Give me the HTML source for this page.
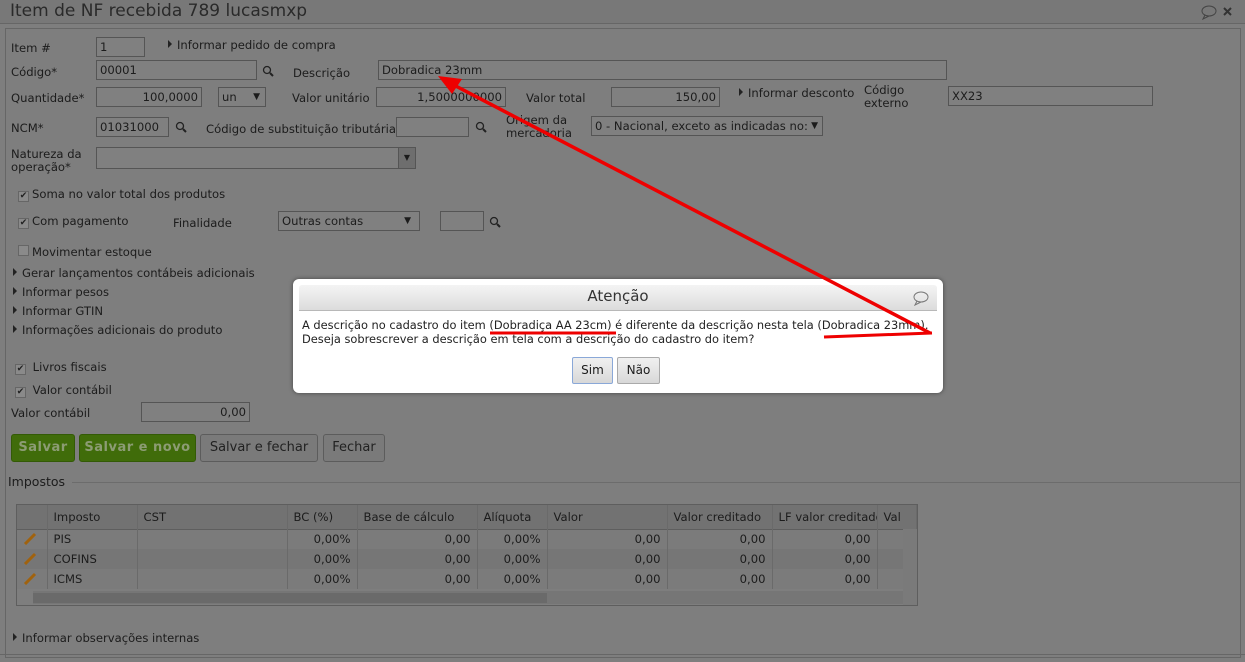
<!DOCTYPE html>
<html><head><meta charset="utf-8"><style>
*{box-sizing:border-box;margin:0;padding:0}
body{width:1245px;height:662px;overflow:hidden;background:#7e7e7e;font-family:"DejaVu Sans","Liberation Sans",sans-serif;font-size:11.6px;color:#1c1c1c;position:relative}
.a{position:absolute;white-space:nowrap}
.in{position:absolute;height:20px;border:1px solid #555;background:#808080;padding:2px 3px;font-size:11.6px;line-height:14px;white-space:nowrap;overflow:hidden}
.r{text-align:right}
.tri{display:inline-block;width:0;height:0;border-top:4px solid transparent;border-bottom:4px solid transparent;border-left:4px solid #222;margin-right:5px;vertical-align:1px}
.cb{display:inline-block;width:11px;height:11px;border:1px solid #666;background:#8a8a8a;vertical-align:-1px;margin-right:3px;font-size:9px;line-height:9px;text-align:center;color:#222;position:relative;top:-1px}
.mag{position:absolute;width:12px;height:12px}
.btn{position:absolute;height:28px;border-radius:3px;font-size:13px;line-height:26px;text-align:center}
.g{background:#406c0a;border:1px solid #335a06;color:#8c9c74;font-weight:bold;letter-spacing:.5px}
.gr{background:#7a7a7a;border:1px solid #5c5c5c;color:#222}
table{border-collapse:collapse;font-size:11.6px;table-layout:fixed}
td{height:20px;border-right:1px solid #6a6a6a;padding:0 6px;white-space:nowrap;overflow:hidden}
</style></head><body>
<div class="a" style="left:0;top:0;width:1245px;height:24px;background:#787878;border-bottom:1px solid #666"></div>
<div class="a" style="left:10px;top:1px;font-size:17px;color:#2a2a2a">Item de NF recebida 789 lucasmxp</div>
<svg class="a" style="left:1200px;top:4px" width="42" height="16"><ellipse cx="9" cy="7" rx="7" ry="5" fill="none" stroke="#444"/><path d="M5 11 L3 15 L9 12" fill="none" stroke="#444"/><path d="M24 4 L31 11 M31 4 L24 11" stroke="#333" stroke-width="2"/></svg>
<div class="a" style="left:5px;top:28px;width:1236px;height:630px;border:1px solid #666"></div>

<div class="a" style="left:11px;top:41px">Item #</div>
<div class="in" style="left:96px;top:37px;width:49px">1</div>
<div class="a" style="left:168px;top:38px"><span class="tri"></span>Informar pedido de compra</div>

<div class="a" style="left:11px;top:65px">Código*</div>
<div class="in" style="left:96px;top:60px;width:161px">00001</div>
<svg class="mag" style="left:262px;top:65px"><circle cx="5" cy="5" r="3.5" fill="none" stroke="#222" stroke-width="1.3"/><path d="M8 8 L11 11" stroke="#222" stroke-width="2"/></svg>
<div class="a" style="left:293px;top:66px">Descrição</div>
<div class="in" style="left:378px;top:60px;width:569px">Dobradica 23mm</div>

<div class="a" style="left:11px;top:91px">Quantidade*</div>
<div class="in r" style="left:96px;top:87px;width:106px">100,0000</div>
<div class="in" style="left:218px;top:87px;width:48px">un<span style="position:absolute;right:5px;font-size:9px">▼</span></div>
<div class="a" style="left:292px;top:91px">Valor unitário</div>
<div class="in r" style="left:376px;top:87px;width:130px">1,5000000000</div>
<div class="a" style="left:526px;top:91px">Valor total</div>
<div class="in r" style="left:611px;top:87px;width:109px">150,00</div>
<div class="a" style="left:739px;top:86px"><span class="tri"></span>Informar desconto</div>
<div class="a" style="left:864px;top:84px;line-height:13px">Código<br>externo</div>
<div class="in" style="left:948px;top:86px;width:205px">XX23</div>

<div class="a" style="left:11px;top:121px">NCM*</div>
<div class="in" style="left:96px;top:117px;width:73px">01031000</div>
<svg class="mag" style="left:175px;top:121px"><circle cx="5" cy="5" r="3.5" fill="none" stroke="#222" stroke-width="1.3"/><path d="M8 8 L11 11" stroke="#222" stroke-width="2"/></svg>
<div class="a" style="left:206px;top:122px">Código de substituição tributária</div>
<div class="in" style="left:396px;top:117px;width:73px"></div>
<svg class="mag" style="left:475px;top:121px"><circle cx="5" cy="5" r="3.5" fill="none" stroke="#222" stroke-width="1.3"/><path d="M8 8 L11 11" stroke="#222" stroke-width="2"/></svg>
<div class="a" style="left:506px;top:114px;line-height:13px">Origem da<br>mercadoria</div>
<div class="in" style="left:591px;top:116px;width:232px">0 - Nacional, exceto as indicadas no:<span style="position:absolute;right:4px;font-size:9px">▼</span></div>

<div class="a" style="left:11px;top:148px;line-height:13px">Natureza da<br>operação*</div>
<div class="in" style="left:96px;top:147px;width:320px;height:22px"></div>
<div class="a" style="left:398px;top:148px;width:17px;height:20px;border-left:1px solid #555;background:#6e6e6e;font-size:8px;text-align:center;line-height:20px">▼</div>

<div class="a" style="left:18px;top:187px"><span class="cb">✔</span>Soma no valor total dos produtos</div>
<div class="a" style="left:18px;top:214px"><span class="cb">✔</span>Com pagamento</div>
<div class="a" style="left:173px;top:216px">Finalidade</div>
<div class="in" style="left:278px;top:211px;width:142px">Outras contas<span style="position:absolute;right:8px;font-size:9px">▼</span></div>
<div class="in" style="left:440px;top:211px;width:44px"></div>
<svg class="mag" style="left:489px;top:216px"><circle cx="5" cy="5" r="3.5" fill="none" stroke="#222" stroke-width="1.3"/><path d="M8 8 L11 11" stroke="#222" stroke-width="2"/></svg>
<div class="a" style="left:18px;top:245px"><span class="cb"></span>Movimentar estoque</div>
<div class="a" style="left:13px;top:266px"><span class="tri"></span>Gerar lançamentos contábeis adicionais</div>
<div class="a" style="left:13px;top:285px"><span class="tri"></span>Informar pesos</div>
<div class="a" style="left:13px;top:304px"><span class="tri"></span>Informar GTIN</div>
<div class="a" style="left:13px;top:323px"><span class="tri"></span>Informações adicionais do produto</div>
<div class="a" style="left:15px;top:360px"><span class="cb">✔</span> Livros fiscais</div>
<div class="a" style="left:15px;top:383px"><span class="cb">✔</span> Valor contábil</div>
<div class="a" style="left:11px;top:406px">Valor contábil</div>
<div class="in r" style="left:141px;top:402px;width:109px">0,00</div>

<div class="btn g" style="left:11px;top:434px;width:64px">Salvar</div>
<div class="btn g" style="left:79px;top:434px;width:117px">Salvar e novo</div>
<div class="btn gr" style="left:200px;top:434px;width:118px">Salvar e fechar</div>
<div class="btn gr" style="left:323px;top:434px;width:62px">Fechar</div>

<div class="a" style="left:8px;top:474px;font-size:12.5px">Impostos</div>
<div class="a" style="left:72px;top:482px;width:1168px;border-top:1px solid #6c6c6c"></div>

<div class="a" style="left:16px;top:504px;width:902px;height:102px;border:1px solid #5e5e5e;overflow:hidden">
<table style="width:900px">
<colgroup><col style="width:30px"><col style="width:90px"><col style="width:150px"><col style="width:70px"><col style="width:120px"><col style="width:70px"><col style="width:120px"><col style="width:105px"><col style="width:105px"><col></colgroup>
<tr style="background:#727272;border-bottom:1px solid #5e5e5e"><td style="height:24px"></td><td>Imposto</td><td>CST</td><td>BC (%)</td><td>Base de cálculo</td><td>Alíquota</td><td>Valor</td><td>Valor creditado</td><td>LF valor creditado</td><td>Val</td></tr>
<tr style="background:#7b7b7b"><td><svg width="14" height="14"><path d="M2 13 L12 3" stroke="#a0620e" stroke-width="3"/></svg></td><td>PIS</td><td></td><td class="r">0,00%</td><td class="r">0,00</td><td class="r">0,00%</td><td class="r">0,00</td><td class="r">0,00</td><td class="r">0,00</td><td></td></tr>
<tr style="background:#767676"><td><svg width="14" height="14"><path d="M2 13 L12 3" stroke="#a0620e" stroke-width="3"/></svg></td><td>COFINS</td><td></td><td class="r">0,00%</td><td class="r">0,00</td><td class="r">0,00%</td><td class="r">0,00</td><td class="r">0,00</td><td class="r">0,00</td><td></td></tr>
<tr style="background:#7b7b7b"><td><svg width="14" height="14"><path d="M2 13 L12 3" stroke="#a0620e" stroke-width="3"/></svg></td><td>ICMS</td><td></td><td class="r">0,00%</td><td class="r">0,00</td><td class="r">0,00%</td><td class="r">0,00</td><td class="r">0,00</td><td class="r">0,00</td><td></td></tr>
</table>
<div class="a" style="left:16px;top:86px;width:870px;height:13px;background:#767676"></div>
<div class="a" style="left:16px;top:88px;width:514px;height:10px;background:#6a6a6a"></div>
<div class="a" style="left:886px;top:24px;width:15px;height:76px;background:#7a7a7a"></div>
</div>

<div class="a" style="left:13px;top:631px"><span class="tri"></span>Informar observações internas</div>
<div class="a" style="left:0;top:654px;width:1245px;border-top:1px solid #666"></div>

<div class="a" style="left:293px;top:279px;width:650px;height:114px;background:#fff;border-radius:6px;box-shadow:0 0 4px #444"></div>
<div class="a" style="left:299px;top:285px;width:638px;height:26px;background:linear-gradient(#f4f4f4,#dcdcdc);border-bottom:1px solid #b8b8b8;border-radius:3px 3px 0 0"></div>
<div class="a" style="left:299px;top:287px;width:638px;text-align:center;font-size:15px;color:#333">Atenção</div>
<svg class="a" style="left:912px;top:290px" width="18" height="16"><ellipse cx="9" cy="7" rx="7" ry="5" fill="none" stroke="#777"/><path d="M5 11 L3 15 L9 12" fill="none" stroke="#777"/></svg>
<div class="a" style="left:302px;top:318px;line-height:14px;color:#222;font-size:11.4px">A descrição no cadastro do item (Dobradiça AA 23cm) é diferente da descrição nesta tela (Dobradica 23mm).<br>Deseja sobrescrever a descrição em tela com a descrição do cadastro do item?</div>
<div class="a" style="left:572px;top:357px;width:41px;height:27px;border:1px solid #8aa8d8;background:linear-gradient(#f0f0f0,#d8d8d8);border-radius:2px;text-align:center;line-height:25px;font-size:12px">Sim</div>
<div class="a" style="left:617px;top:357px;width:43px;height:27px;border:1px solid #aaa;background:linear-gradient(#f0f0f0,#d8d8d8);border-radius:2px;text-align:center;line-height:25px;font-size:12px">Não</div>

<svg class="a" style="left:0;top:0" width="1245" height="662">
<path d="M490 333 L616 333" stroke="#e00" stroke-width="3"/>
<path d="M824 337 L932 333" stroke="#e00" stroke-width="3"/>
<path d="M930 333 L448 82" stroke="#e00" stroke-width="3.5"/>
<path d="M438 76 L462 79 L452 94 Z" fill="#e00"/>
</svg>
</body></html>
